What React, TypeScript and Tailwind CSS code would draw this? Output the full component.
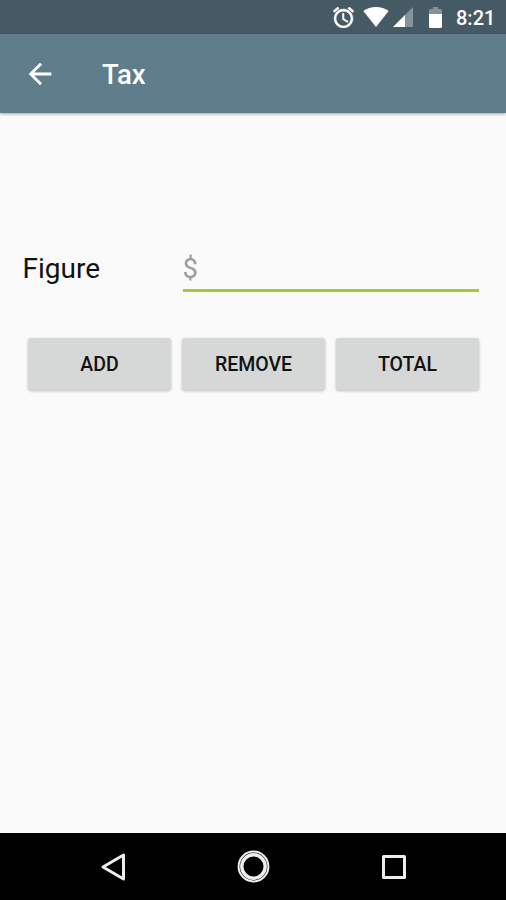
import { useState } from 'react';

const ACTIONS = ['Add', 'Remove', 'Total'];

function StatusBar() {
  return (
    <div className="flex h-[34px] items-center bg-[#455a64] pl-[333px] text-white">
      <svg width="21" height="21" viewBox="2 2 20 20" fill="currentColor" stroke="currentColor" strokeWidth="0.4" aria-hidden="true">
        <path d="M22 5.72l-4.6-3.86-1.29 1.53 4.6 3.86L22 5.72zM7.88 3.39L6.6 1.86 2 5.71l1.29 1.53 4.59-3.85zM12.5 8H11v6l4.75 2.85.75-1.23-4-2.37V8zM12 4c-4.97 0-9 4.03-9 9s4.02 9 9 9c4.97 0 9-4.03 9-9s-4.03-9-9-9zm0 16c-3.87 0-7-3.13-7-7s3.13-7 7-7 7 3.13 7 7-3.13 7-7 7z" />
      </svg>
      <svg className="ml-[8.5px]" width="26" height="20" viewBox="0 0 26 20" fill="currentColor" aria-hidden="true">
        <path d="M13 20L.3 4C4 1.3 8.3 0 13 0s9 1.3 12.7 4z" />
      </svg>
      <svg className="ml-[4.5px]" width="20" height="20" viewBox="0 0 20 20" fill="currentColor" aria-hidden="true">
        <path opacity="0.35" d="M0 20H20V0z" />
        <path d="M0 20H12V8z" />
      </svg>
      <svg className="ml-[15.5px]" width="13" height="21" viewBox="0 0 13 21" fill="currentColor" aria-hidden="true">
        <path opacity="0.35" d="M0 7V3.5Q0 2 1.5 2H4V0h5v2h2.5Q13 2 13 3.5V7z" />
        <path d="M0 7h13v12.5q0 1.5-1.5 1.5h-10Q0 21 0 19.5z" />
      </svg>
      <span className="ml-[14.5px] pt-[2px] text-[20px] leading-none font-medium">8:21</span>
    </div>
  );
}

function AppBar() {
  return (
    <header className="z-10 flex h-[79px] items-center bg-[#607d8b] pl-[23px] text-white shadow-[0_1px_3px_rgba(0,0,0,0.35)]">
      <button type="button" aria-label="Back">
        <svg width="34" height="34" viewBox="0 0 24 24" fill="currentColor" aria-hidden="true">
          <path d="M20 11H7.83l5.59-5.59L12 4l-8 8 8 8 1.41-1.41L7.83 13H20v-2z" />
        </svg>
      </button>
      <h1 className="ml-[45px] pt-[2px] text-[27.5px] leading-none font-medium">Tax</h1>
    </header>
  );
}

function NavBar() {
  return (
    <nav className="flex h-[67px] items-center bg-black pl-[100px] text-[#eeeeee]">
      <svg width="27" height="30" viewBox="0 0 27 30" fill="none" stroke="currentColor" strokeWidth="3" strokeLinejoin="round" aria-hidden="true">
        <path d="M23.5 3v24L3 15z" />
      </svg>
      <svg className="ml-[110px]" width="33" height="33" viewBox="0 0 33 33" fill="none" stroke="currentColor" aria-hidden="true">
        <circle cx="16.5" cy="16.5" r="14.9" strokeWidth="2" />
        <circle cx="16.5" cy="16.5" r="11.7" strokeWidth="3.4" />
      </svg>
      <svg className="ml-[112px]" width="24" height="24" viewBox="0 0 24 24" fill="none" stroke="currentColor" strokeWidth="3" strokeLinejoin="round" aria-hidden="true">
        <path d="M1.5 1.5h21v21h-21z" />
      </svg>
    </nav>
  );
}

export default function App() {
  const [figure, setFigure] = useState('');

  return (
    <div className="flex h-[900px] w-[506px] flex-col overflow-hidden bg-[#fafafa] font-['Roboto',sans-serif]">
      <StatusBar />
      <AppBar />

      <main className="flex-1 pt-[132px]">
        <div className="flex h-[47px] pr-[27px] pl-[22.5px]">
          <label htmlFor="figure" className="w-[160px] pt-[8px] text-[28px] leading-[32px] text-[#111111]">
            Figure
          </label>
          <input
            id="figure"
            value={figure}
            onChange={(e) => setFigure(e.target.value)}
            placeholder="$"
            className="h-[47px] min-w-0 flex-1 border-b-[3px] border-[#a4ca39] pt-[2px] text-[27.5px] leading-[32px] text-[#111111] outline-none placeholder:text-[#9c9c9c]"
          />
        </div>

        <div className="mt-[46px] grid grid-cols-3 gap-[11px] pr-[27px] pl-[28px]">
          {ACTIONS.map((action) => (
            <button
              key={action}
              type="button"
              className="h-[52px] rounded-[3px] bg-[#d6d7d7] pt-px text-[19.5px] font-medium text-[#111111] uppercase shadow-[0_1px_3px_rgba(0,0,0,0.25)]"
            >
              {action}
            </button>
          ))}
        </div>
      </main>

      <NavBar />
    </div>
  );
}
